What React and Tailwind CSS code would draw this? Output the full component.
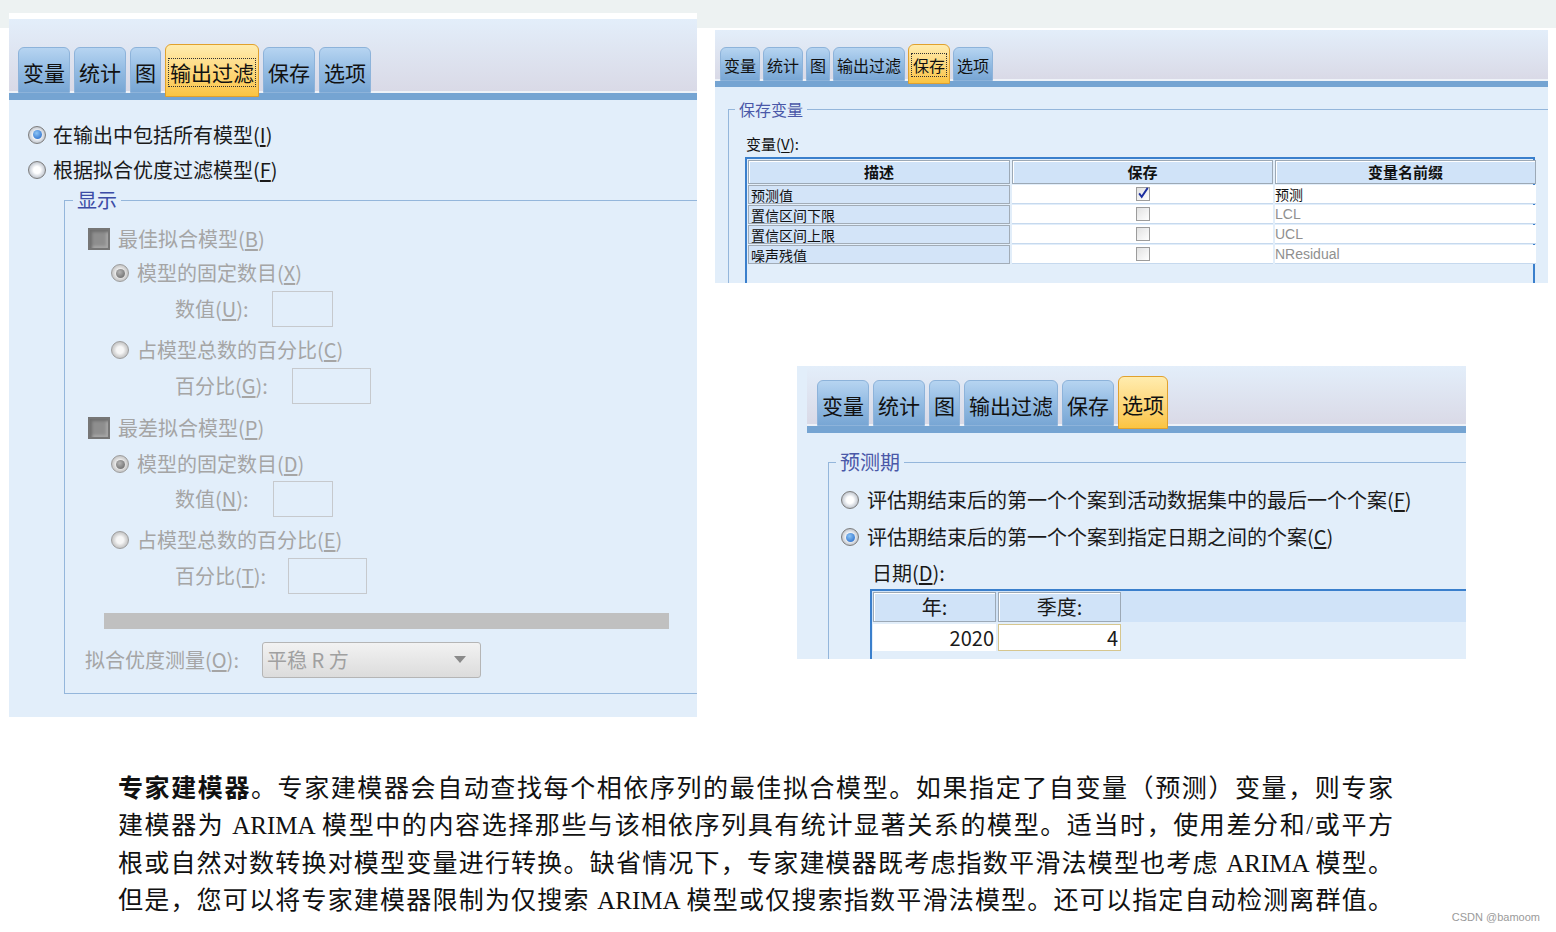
import React from "react";

const ui = "font-['Noto_Sans_CJK_SC',sans-serif]";

const M = ({ c }) => (
  <>
    (<span className="underline underline-offset-2">{c}</span>)
  </>
);

const Radio = ({ checked, disabled }) => (
  <span
    className={`w-[18px] h-[18px] shrink-0 rounded-full border flex items-center justify-center ${
      disabled
        ? "border-[#9d9d9d] bg-[radial-gradient(circle,#f6f6f6_30%,#d6d6d6_55%,#b4b4b4_90%)]"
        : "border-[#7d7d7d] bg-[radial-gradient(circle,#ffffff_30%,#d9dde3_55%,#a9adb3_90%)]"
    }`}
  >
    {checked && (
      <span
        className={`w-[9px] h-[9px] rounded-full ${
          disabled
            ? "bg-[radial-gradient(circle_at_40%_35%,#b5b5b5,#5f5f5f)]"
            : "bg-[radial-gradient(circle_at_40%_35%,#8cc4f5,#1d62c6)]"
        }`}
      />
    )}
  </span>
);

const GrayBox = () => (
  <span className="w-[22px] h-[22px] shrink-0 border-2 border-[#767676] bg-[#8e8e8e] shadow-[inset_2px_2px_3px_#6d6d6d,inset_-2px_-2px_3px_#a8a8a8]" />
);

const Tab = ({ label, active, focus, size }) => {
  const text = size === "sm" ? "text-[16px]" : "text-[21px]";
  const base =
    size === "lg"
      ? "h-[46px] px-[4px]"
      : size === "sm"
      ? "h-[34px] px-[3px]"
      : "h-[46px] px-[4px]";
  const activeCls =
    size === "lg"
      ? "h-[53px] -mb-[4px] px-[2px]"
      : size === "sm"
      ? "h-[40px] -mb-[3px] px-[2px]"
      : "h-[53px] -mb-[3px] px-[3px]";
  return (
    <div
      className={`relative z-10 flex items-center justify-center rounded-t-[6px] border leading-none text-[#111] ${text} ${
        active
          ? `${activeCls} border-[#e1a12d] bg-gradient-to-b from-[#ffecae] to-[#fbc440]`
          : `${base} border-[#8db3da] bg-gradient-to-b from-[#b6d4f1] via-[#94bce3] to-[#78a6d4]`
      }`}
    >
      <span
        className={`${
          focus ? "border border-dotted border-[#333] px-[1px] py-[3px]" : "py-[4px]"
        } ${size === "sm" ? "mt-[2px]" : "mt-[4px]"}`}
      >
        {label}
      </span>
    </div>
  );
};

const tabs = ["变量", "统计", "图", "输出过滤", "保存", "选项"];

const Strip = ({ active, focus, size, h, line, pl, gap }) => (
  <div>
    <div
      className={`flex items-end bg-gradient-to-b from-[#e3eefa] to-[#d9d9e6] shadow-[inset_0_-2px_0_#eef2f8] ${h} ${pl} ${gap}`}
    >
      {tabs.map((t) => (
        <Tab key={t} label={t} active={t === active} focus={focus && t === active} size={size} />
      ))}
    </div>
    <div className={`bg-[#75a4d2] ${line}`} />
  </div>
);

const DisabledLabelBox = ({ label, m, lw, bw }) => (
  <div className="h-[32px] flex items-center ml-[110px]">
    <span className={`${lw} text-[#a5a5a5]`}>
      {label}
      <M c={m} />:
    </span>
    <span className={`h-[36px] ${bw} border border-[#c6c9cd]`} />
  </div>
);

const LeftPanel = () => (
  <div className={`w-[688px] h-[704px] shrink-0 border-t-[6px] border-white bg-[#e2eefa] overflow-hidden ${ui}`}>
    <Strip active="输出过滤" focus size="lg" h="h-[74px]" line="h-[7px]" pl="pl-[9px]" gap="gap-[4px]" />
    <div className="pl-[19px] pt-[17px] text-[20px] text-[#1a1a1a]">
      <div className="h-[35px] flex items-center gap-[7px]">
        <Radio checked />
        <span>
          在输出中包括所有模型
          <M c="I" />
        </span>
      </div>
      <div className="h-[35px] flex items-center gap-[7px]">
        <Radio />
        <span>
          根据拟合优度过滤模型
          <M c="F" />
        </span>
      </div>
    </div>
    <fieldset className="ml-[55px] w-[650px] border border-[#94b6db] pb-[15px] text-[20px]">
      <legend className="ml-[8px] px-[4px] leading-[26px] text-[#3c4ca6]">显示</legend>
      <div className="mt-[10px] h-[32px] flex items-center gap-[8px] ml-[23px] text-[#a5a5a5]">
        <GrayBox />
        <span>
          最佳拟合模型
          <M c="B" />
        </span>
      </div>
      <div className="mt-[2px] h-[32px] flex items-center gap-[8px] ml-[46px] text-[#a5a5a5]">
        <Radio checked disabled />
        <span>
          模型的固定数目
          <M c="X" />
        </span>
      </div>
      <div className="mt-[4px]">
        <DisabledLabelBox label="数值" m="U" lw="w-[97px]" bw="w-[61px]" />
      </div>
      <div className="mt-[9px] h-[32px] flex items-center gap-[8px] ml-[46px] text-[#a5a5a5]">
        <Radio disabled />
        <span>
          占模型总数的百分比
          <M c="C" />
        </span>
      </div>
      <div className="mt-[4px]">
        <DisabledLabelBox label="百分比" m="G" lw="w-[117px]" bw="w-[79px]" />
      </div>
      <div className="mt-[10px] h-[32px] flex items-center gap-[8px] ml-[23px] text-[#a5a5a5]">
        <GrayBox />
        <span>
          最差拟合模型
          <M c="P" />
        </span>
      </div>
      <div className="mt-[4px] h-[32px] flex items-center gap-[8px] ml-[46px] text-[#a5a5a5]">
        <Radio checked disabled />
        <span>
          模型的固定数目
          <M c="D" />
        </span>
      </div>
      <div className="mt-[3px]">
        <DisabledLabelBox label="数值" m="N" lw="w-[98px]" bw="w-[60px]" />
      </div>
      <div className="mt-[9px] h-[32px] flex items-center gap-[8px] ml-[46px] text-[#a5a5a5]">
        <Radio disabled />
        <span>
          占模型总数的百分比
          <M c="E" />
        </span>
      </div>
      <div className="mt-[4px]">
        <DisabledLabelBox label="百分比" m="T" lw="w-[113px]" bw="w-[79px]" />
      </div>
      <div className="mt-[21px] ml-[39px] w-[565px] h-[16px] bg-[#c0c0c0]" />
      <div className="mt-[13px] h-[36px] flex items-center ml-[20px]">
        <span className="w-[177px] text-[#a5a5a5]">
          拟合优度测量
          <M c="O" />:
        </span>
        <div className="w-[219px] h-[36px] flex items-center justify-between rounded-[3px] border border-[#b5b5b5] bg-gradient-to-b from-[#f2f2f2] to-[#dcdcdc] pl-[4px] pr-[14px] text-[#a0a0a0]">
          <span>平稳 R 方</span>
          <svg width="12" height="8" viewBox="0 0 12 8">
            <path d="M0 0 L12 0 L6 7 Z" fill="#8a8a8a" />
          </svg>
        </div>
      </div>
    </fieldset>
  </div>
);

const CheckCell = ({ checked }) => (
  <span className="w-[14px] h-[14px] border border-[#9c9c9c] bg-gradient-to-br from-[#e2e2e2] to-[#ffffff] flex items-center justify-center">
    {checked && (
      <svg width="14" height="14" viewBox="0 0 14 14" className="-mt-[3px]">
        <path d="M2.5 7.5 L5.5 11.5 L12.5 1" stroke="#1c2fa0" strokeWidth="2.2" fill="none" />
      </svg>
    )}
  </span>
);

const rows = [
  ["预测值", true, "预测", true],
  ["置信区间下限", false, "LCL", false],
  ["置信区间上限", false, "UCL", false],
  ["噪声残值", false, "NResidual", false],
];

const SavePanel = () => (
  <div className={`w-[833px] h-[253px] bg-[#e2eefa] overflow-hidden ${ui}`}>
    <Strip active="保存" focus size="sm" h="h-[51px]" line="h-[6px]" pl="pl-[5px]" gap="gap-[3px]" />
    <fieldset className="mt-[12px] ml-[13px] w-[900px] h-[300px] border border-[#94b6db]">
      <legend className="ml-[6px] px-[4px] leading-[20px] text-[16px] text-[#4a58a8]">保存变量</legend>
      <div className="mt-[15px] ml-[17px] h-[20px] flex items-center text-[15px] text-[#111]">
        变量
        <M c="V" />:
      </div>
      <div className="mt-[3px] ml-[16px] w-[790px] h-[140px] border-2 border-[#3a7fcc]">
        <div className="grid grid-cols-[262px_261px_261px] gap-x-[2px] gap-y-[1px] p-[1px] text-[14px] text-[#111]">
          {["描述", "保存", "变量名前缀"].map((h) => (
            <div
              key={h}
              className="h-[24px] flex items-center justify-center bg-[#d0e3f8] border border-[#9ca9b6] shadow-[inset_1px_1px_0_#ffffff] font-bold text-[15px]"
            >
              {h}
            </div>
          ))}
          {rows.map(([d, c, p, dark]) => (
            <React.Fragment key={d}>
              <div className="h-[19px] flex items-center pl-[2px] bg-[#d3e4f8] border border-[#a2acb7] leading-none">
                {d}
              </div>
              <div className="h-[19px] flex items-center justify-center bg-white border-b border-[#c6d9ee]">
                <CheckCell checked={c} />
              </div>
              <div
                className={`h-[19px] flex items-center bg-white border-b border-[#c6d9ee] leading-none ${
                  dark ? "text-[#111]" : "text-[#8f8f8f] font-['Liberation_Sans',sans-serif]"
                }`}
              >
                {p}
              </div>
            </React.Fragment>
          ))}
        </div>
      </div>
    </fieldset>
  </div>
);

const OptionsPanel = () => (
  <div className={`w-[669px] h-[293px] bg-[#e2eefa] overflow-hidden pl-[10px] text-[20px] text-[#1a1a1a] ${ui}`}>
    <Strip active="选项" size="md" h="h-[60px]" line="h-[7px]" pl="pl-[10px]" gap="gap-[4px]" />
    <fieldset className="mt-[15px] ml-[21px] w-[700px] h-[300px] border border-[#94b6db]">
      <legend className="ml-[7px] px-[4px] leading-[28px] text-[#4a58a8]">预测期</legend>
      <div className="mt-[6px] ml-[12px] h-[36px] flex items-center gap-[8px]">
        <Radio />
        <span>
          评估期结束后的第一个个案到活动数据集中的最后一个个案
          <M c="F" />
        </span>
      </div>
      <div className="mt-[1px] ml-[12px] h-[36px] flex items-center gap-[8px]">
        <Radio checked />
        <span>
          评估期结束后的第一个个案到指定日期之间的个案
          <M c="C" />
        </span>
      </div>
      <div className="mt-[3px] ml-[43px] h-[30px] flex items-center">
        日期
        <M c="D" />:
      </div>
      <div className="mt-[1px] ml-[41px] w-[700px] h-[100px] border-t-2 border-l-2 border-[#3a7fcc]">
        <div className="h-[31px] pt-[1px] pl-[1px] flex gap-[2px] bg-[#d0e3f8]">
          {["年:", "季度:"].map((h) => (
            <div
              key={h}
              className="w-[123px] h-[30px] flex items-center justify-center border border-[#9ca9b6] shadow-[inset_1px_1px_0_#ffffff]"
            >
              {h}
            </div>
          ))}
        </div>
        <div className="mt-[2px] pl-[1px] flex gap-[2px]">
          <div className="w-[123px] h-[27px] flex items-center justify-end pr-[2px] bg-white">2020</div>
          <div className="w-[123px] h-[27px] flex items-center justify-end pr-[2px] bg-white border border-[#d6c68e]">
            4
          </div>
        </div>
      </div>
    </fieldset>
  </div>
);

const lines = [
  "建模器为 ARIMA 模型中的内容选择那些与该相依序列具有统计显著关系的模型。适当时，使用差分和/或平方",
  "根或自然对数转换对模型变量进行转换。缺省情况下，专家建模器既考虑指数平滑法模型也考虑 ARIMA 模型。",
  "但是，您可以将专家建模器限制为仅搜索 ARIMA 模型或仅搜索指数平滑法模型。还可以指定自动检测离群值。",
];

export default function App() {
  return (
    <div className="relative w-[1556px] h-[932px] overflow-hidden bg-[linear-gradient(#edf2f2_0_28px,#ffffff_28px)]">
      <div className="flex pl-[9px] pt-[13px]">
        <LeftPanel />
        <div className="ml-[18px] pt-[17px]">
          <SavePanel />
          <div className="mt-[83px] ml-[82px]">
            <OptionsPanel />
          </div>
        </div>
      </div>

      <div className="mt-[51px] ml-[118px] w-[1275px] text-[25px] leading-[37.4px] text-[#111] font-['Liberation_Serif','Noto_Sans_CJK_SC',serif]">
        <div className="text-justify [text-align-last:justify]">
          <span className="font-bold font-['Noto_Sans_CJK_SC',sans-serif]">专家建模器</span>
          。专家建模器会自动查找每个相依序列的最佳拟合模型。如果指定了自变量（预测）变量，则专家
        </div>
        {lines.map((l) => (
          <div key={l} className="text-justify [text-align-last:justify]">
            {l}
          </div>
        ))}
      </div>

      <div className="absolute right-[16px] bottom-[7px] text-[11px] text-[#9a9a9a] font-['Liberation_Sans',sans-serif]">
        CSDN @bamoom
      </div>
    </div>
  );
}
